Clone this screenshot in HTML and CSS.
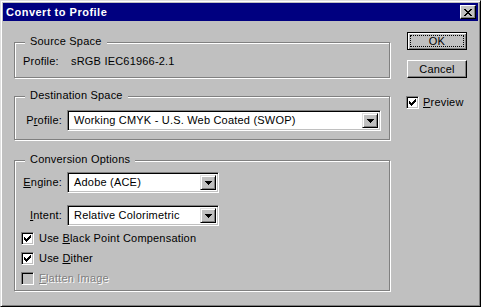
FILE: index.html
```html
<!DOCTYPE html>
<html lang="en">
<head>
    <meta charset="UTF-8">
    <meta name="viewport" content="width=device-width, initial-scale=1.0">
    <title>Convert to Profile</title>
    <link rel="stylesheet" href="styles.css">
</head>
<body>
    <div class="window">
        <div class="titlebar">
            <span class="title">Convert to Profile</span>
            <span class="close">
                <svg width="8" height="7" viewBox="0 0 8 7" shape-rendering="crispEdges">
                    <path d="M0 0h2v1h-2z M6 0h2v1h-2z M1 1h2v1h-2z M5 1h2v1h-2z M2 2h4v1h-4z M3 3h2v1h-2z M2 4h4v1h-4z M1 5h2v1h-2z M5 5h2v1h-2z M0 6h2v1h-2z M6 6h2v1h-2z" fill="#000"/>
                </svg>
            </span>
        </div>

        <div class="client">
            <div class="main">
                <div class="group group-source">
                    <div class="group-title">Source Space</div>
                    <div class="source-row">
                        <span class="source-label">Profile:</span>
                        <span>sRGB IEC61966-2.1</span>
                    </div>
                </div>

                <div class="group group-dest">
                    <div class="group-title">Destination Space</div>
                    <div class="field-row">
                        <span class="field-label">P<u>r</u>ofile:</span>
                        <div class="combo combo-wide">
                            <span class="combo-text">Working CMYK - U.S. Web Coated (SWOP)</span>
                            <span class="combo-btn">
                                <svg width="7" height="4" viewBox="0 0 7 4" shape-rendering="crispEdges"><path d="M0 0h7v1h-7z M1 1h5v1h-5z M2 2h3v1h-3z M3 3h1v1h-1z" fill="#000"/></svg>
                            </span>
                        </div>
                    </div>
                </div>

                <div class="group group-conv">
                    <div class="group-title">Conversion Options</div>
                    <div class="field-row row-engine">
                        <span class="field-label"><u>E</u>ngine:</span>
                        <div class="combo combo-short">
                            <span class="combo-text">Adobe (ACE)</span>
                            <span class="combo-btn">
                                <svg width="7" height="4" viewBox="0 0 7 4" shape-rendering="crispEdges"><path d="M0 0h7v1h-7z M1 1h5v1h-5z M2 2h3v1h-3z M3 3h1v1h-1z" fill="#000"/></svg>
                            </span>
                        </div>
                    </div>
                    <div class="field-row row-intent">
                        <span class="field-label"><u>I</u>ntent:</span>
                        <div class="combo combo-short">
                            <span class="combo-text">Relative Colorimetric</span>
                            <span class="combo-btn">
                                <svg width="7" height="4" viewBox="0 0 7 4" shape-rendering="crispEdges"><path d="M0 0h7v1h-7z M1 1h5v1h-5z M2 2h3v1h-3z M3 3h1v1h-1z" fill="#000"/></svg>
                            </span>
                        </div>
                    </div>
                    <div class="checks">
                        <div class="check">
                            <span class="box">
                                <svg width="7" height="7" viewBox="0 0 7 7" shape-rendering="crispEdges"><path d="M6 0h1v3h-1z M5 1h1v3h-1z M4 2h1v3h-1z M3 3h1v3h-1z M2 4h1v3h-1z M1 3h1v3h-1z M0 2h1v3h-1z" fill="#000"/></svg>
                            </span>
                            <span>Use <u>B</u>lack Point Compensation</span>
                        </div>
                        <div class="check">
                            <span class="box">
                                <svg width="7" height="7" viewBox="0 0 7 7" shape-rendering="crispEdges"><path d="M6 0h1v3h-1z M5 1h1v3h-1z M4 2h1v3h-1z M3 3h1v3h-1z M2 4h1v3h-1z M1 3h1v3h-1z M0 2h1v3h-1z" fill="#000"/></svg>
                            </span>
                            <span>Use <u>D</u>ither</span>
                        </div>
                        <div class="check check-disabled">
                            <span class="box"></span>
                            <span><u>F</u>latten Image</span>
                        </div>
                    </div>
                </div>
            </div>

            <div class="side">
                <div class="btn btn-default"><span class="focus">OK</span></div>
                <div class="btn">Cancel</div>
                <div class="check check-preview">
                    <span class="box">
                        <svg width="7" height="7" viewBox="0 0 7 7" shape-rendering="crispEdges"><path d="M6 0h1v3h-1z M5 1h1v3h-1z M4 2h1v3h-1z M3 3h1v3h-1z M2 4h1v3h-1z M1 3h1v3h-1z M0 2h1v3h-1z" fill="#000"/></svg>
                    </span>
                    <span><u>P</u>review</span>
                </div>
            </div>
        </div>
    </div>
</body>
</html>
```

FILE: styles.css
```css
body {
    margin: 0;
    font-family: "Liberation Sans", Arial, sans-serif;
    font-size: 11px;
    line-height: 13px;
    letter-spacing: 0.2px;
    color: #000;
    background-color: #c0c0c0;
}
.window {
    box-sizing: border-box;
    width: 481px;
    height: 307px;
    padding: 2px;
    background-color: #c0c0c0;
    border: 1px solid;
    border-color: #dfdfdf #000 #000 #dfdfdf;
    box-shadow: inset 1px 1px 0 #fff, inset -1px -1px 0 #808080;
}
.titlebar {
    display: flex;
    align-items: center;
    justify-content: space-between;
    height: 18px;
    padding: 0 2px 0 3px;
    background-color: #000080;
}
.title {
    color: #fff;
    font-weight: bold;
    letter-spacing: 0.5px;
}
.close {
    box-sizing: border-box;
    width: 16px;
    height: 14px;
    display: flex;
    align-items: center;
    justify-content: center;
    background-color: #c0c0c0;
    border: 1px solid;
    border-color: #fff #000 #000 #fff;
    box-shadow: inset -1px -1px 0 #808080;
}
.client {
    display: flex;
    align-items: flex-start;
    padding-left: 11px;
}
.main {
    width: 376px;
    padding-top: 21px;
}
.group {
    box-sizing: border-box;
    border: 1px solid #808080;
    box-shadow: 1px 1px 0 #fff, inset 1px 1px 0 #fff;
}
.group-title {
    width: max-content;
    margin: -8px 0 0 10px;
    padding: 0 5px;
    background-color: #c0c0c0;
}
.group-source {
    padding-bottom: 9px;
}
.group-dest {
    margin-top: 18px;
    padding-bottom: 8px;
}
.group-conv {
    margin-top: 20px;
    padding-bottom: 5px;
}
.source-row {
    display: flex;
    margin-top: 7px;
    padding-left: 8px;
}
.source-label {
    width: 48px;
}
.field-row {
    display: flex;
    align-items: center;
}
.group-dest .field-row {
    margin-top: 8px;
}
.row-engine {
    margin-top: 6px;
}
.row-intent {
    margin-top: 12px;
}
.field-label {
    width: 47px;
    text-align: right;
    margin-right: 5px;
}
.combo {
    box-sizing: border-box;
    display: flex;
    height: 21px;
    background-color: #fff;
    border: 1px solid;
    border-color: #808080 #fff #fff #808080;
    box-shadow: inset 1px 1px 0 #000, inset -1px -1px 0 #c0c0c0;
    padding: 2px 2px 2px 0;
}
.combo-wide {
    width: 314px;
}
.combo-short {
    width: 152px;
}
.combo-text {
    flex: 1;
    padding-left: 6px;
    line-height: 15px;
}
.combo-btn {
    box-sizing: border-box;
    width: 16px;
    display: flex;
    align-items: center;
    justify-content: center;
    background-color: #c0c0c0;
    border: 1px solid;
    border-color: #dfdfdf #000 #000 #dfdfdf;
    box-shadow: inset 1px 1px 0 #fff, inset -1px -1px 0 #808080;
}
.checks {
    margin-top: 6px;
    padding-left: 6px;
    display: flex;
    flex-direction: column;
    gap: 7px;
}
.check {
    display: flex;
    align-items: center;
    gap: 5px;
    height: 13px;
}
.box {
    box-sizing: border-box;
    width: 13px;
    height: 13px;
    display: flex;
    align-items: center;
    justify-content: center;
    background-color: #fff;
    border: 1px solid;
    border-color: #808080 #fff #fff #808080;
    box-shadow: inset 1px 1px 0 #000, inset -1px -1px 0 #c0c0c0;
}
.check-disabled {
    color: #808080;
    text-shadow: 1px 1px 0 #fff;
}
.check-disabled .box {
    background-color: #c0c0c0;
}
.side {
    width: 60px;
    margin-left: 17px;
    padding-top: 11px;
}
.btn {
    box-sizing: border-box;
    height: 18px;
    display: flex;
    align-items: center;
    justify-content: center;
    border: 1px solid;
    border-color: #fff #000 #000 #fff;
    box-shadow: inset -1px -1px 0 #808080;
    margin-bottom: 10px;
}
.btn-default {
    border-color: #000;
    box-shadow: inset 1px 1px 0 #fff, inset -1px -1px 0 #808080;
    padding: 3px;
}
.focus {
    flex: 1;
    align-self: stretch;
    text-align: center;
    line-height: 10px;
    outline: 1px dotted #000;
}
.check-preview {
    margin-top: 18px;
    margin-left: -1px;
    gap: 4px;
}
```
